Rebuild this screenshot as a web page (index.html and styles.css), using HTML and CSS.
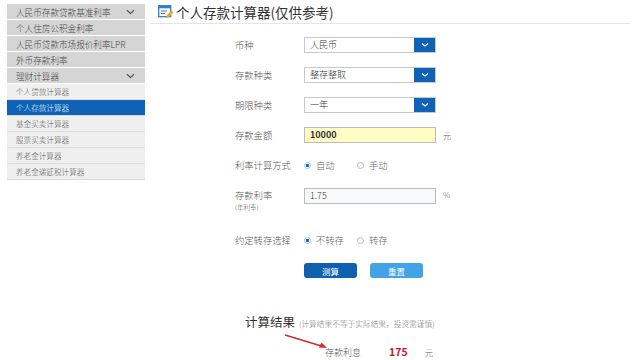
FILE: index.html
```html
<!DOCTYPE html>
<html lang="zh-CN">
<head>
    <meta charset="UTF-8">
    <meta name="viewport" content="width=device-width, initial-scale=1.0">
    <title>个人存款计算器</title>
    <link rel="stylesheet" href="styles.css">
</head>
<body>
    <div class="page">
        <ul class="side-nav">
            <li class="nav-item">人民币存款贷款基准利率
                <svg class="chev" viewBox="0 0 10 6"><path d="M1 1l4 3.5L9 1" fill="none" stroke="#555" stroke-width="1.3"/></svg>
            </li>
            <li class="nav-item">个人住房公积金利率</li>
            <li class="nav-item">人民币贷款市场报价利率LPR</li>
            <li class="nav-item">外币存款利率</li>
            <li class="nav-item">理财计算器
                <svg class="chev" viewBox="0 0 10 6"><path d="M1 1l4 3.5L9 1" fill="none" stroke="#555" stroke-width="1.3"/></svg>
            </li>
            <li class="sub-item">个人贷款计算器</li>
            <li class="sub-item active">个人存款计算器</li>
            <li class="sub-item">基金买卖计算器</li>
            <li class="sub-item">股票买卖计算器</li>
            <li class="sub-item">养老金计算器</li>
            <li class="sub-item">养老金递延税计算器</li>
        </ul>

        <div class="main">
            <h1 class="title">
                <svg class="title-icon" viewBox="0 0 15 14">
                    <rect x="0.7" y="0.7" width="12" height="11" fill="#fff" stroke="#2f7fd0" stroke-width="1.3"/>
                    <rect x="0.7" y="0.7" width="12" height="2.6" fill="#2f7fd0"/>
                    <path d="M3 6h6M3 8.5h4" stroke="#2f7fd0" stroke-width="1.2"/>
                    <path d="M8 13l1-3 4.5-4.5 2 2L11 12z" fill="#f0a21e"/>
                </svg>
                个人存款计算器(仅供参考)
            </h1>

            <form class="calc-form">
                <div class="row">
                    <span class="label">币种</span>
                    <div class="select">
                        <span class="select-text">人民币</span>
                        <span class="select-btn"><svg viewBox="0 0 10 6"><path d="M2 1.5l3 2.5 3-2.5" fill="none" stroke="#fff" stroke-width="1.2"/></svg></span>
                    </div>
                </div>
                <div class="row">
                    <span class="label">存款种类</span>
                    <div class="select">
                        <span class="select-text">整存整取</span>
                        <span class="select-btn"><svg viewBox="0 0 10 6"><path d="M2 1.5l3 2.5 3-2.5" fill="none" stroke="#fff" stroke-width="1.2"/></svg></span>
                    </div>
                </div>
                <div class="row">
                    <span class="label">期限种类</span>
                    <div class="select">
                        <span class="select-text">一年</span>
                        <span class="select-btn"><svg viewBox="0 0 10 6"><path d="M2 1.5l3 2.5 3-2.5" fill="none" stroke="#fff" stroke-width="1.2"/></svg></span>
                    </div>
                </div>
                <div class="row">
                    <span class="label">存款金额</span>
                    <div class="text-input amount">10000</div>
                    <span class="unit">元</span>
                </div>
                <div class="row">
                    <span class="label">利率计算方式</span>
                    <span class="radio checked"></span><span class="radio-text">自动</span>
                    <span class="radio"></span><span class="radio-text">手动</span>
                </div>
                <div class="row rate-row">
                    <span class="label">存款利率<small class="sub-label">(年利率)</small></span>
                    <div class="text-input rate">1.75</div>
                    <span class="unit">%</span>
                </div>
                <div class="row transfer-row">
                    <span class="label">约定转存选择</span>
                    <span class="radio checked"></span><span class="radio-text">不转存</span>
                    <span class="radio"></span><span class="radio-text">转存</span>
                </div>
                <div class="buttons">
                    <button type="button" class="btn btn-calc">测算</button>
                    <button type="button" class="btn btn-reset">重置</button>
                </div>
            </form>

            <div class="result">
                <h2 class="result-title">计算结果<span class="note">(计算结果不等于实际结果，投资需谨慎)</span></h2>
                <div class="result-row">
                    <span class="result-label">存款利息</span>
                    <span class="result-value">175</span>
                    <span class="result-unit">元</span>
                </div>
            </div>
        </div>
    </div>

    <svg class="arrow" viewBox="0 0 50 20">
        <path d="M2 2L40 13.5" stroke="#d8262c" stroke-width="1.4"/>
        <path d="M44 15l-8-0.5 2.5-5z" fill="#d8262c"/>
    </svg>
</body>
</html>
```

FILE: styles.css
```css
body {
    margin: 0;
    font-family: "Noto Sans CJK SC", "Liberation Sans", sans-serif;
    font-weight: 300;
    color: #555;
    background: #fff;
    overflow: hidden;
}
.page {
    display: flex;
    align-items: flex-start;
}
.side-nav {
    list-style: none;
    margin: 4px 0 0 7px;
    padding: 0;
    width: 138px;
}
.nav-item {
    display: flex;
    align-items: center;
    justify-content: space-between;
    height: 15px;
    margin-bottom: 1px;
    padding: 0 10px 0 9px;
    background: #d5d5d5;
    font-size: 8.6px;
    color: #444;
    white-space: nowrap;
}
.chev {
    width: 9px;
    height: 6px;
}
.sub-item {
    height: 15px;
    line-height: 15px;
    padding-left: 9px;
    background: #efefef;
    border-bottom: 1px solid #dadada;
    font-size: 7.6px;
    color: #555;
}
.sub-item.active {
    background: #0e63b6;
    color: #fff;
}
.main {
    margin-left: 5px;
    width: 480px;
}
.title {
    display: flex;
    align-items: center;
    height: 23px;
    margin: 0;
    padding-left: 8px;
    border-bottom: 1px solid #e6e6e6;
    font-size: 13.5px;
    font-weight: normal;
    color: #333;
}
.title-icon {
    width: 15px;
    height: 14px;
    margin-right: 3px;
}
.calc-form {
    margin: 6px 0 0 85px;
}
.row {
    display: flex;
    align-items: center;
    height: 30px;
    font-size: 9.3px;
}
.label {
    width: 69px;
    color: #555;
}
.select {
    display: flex;
    width: 132px;
    height: 16px;
    box-sizing: border-box;
    border: 1px solid #c9c9c9;
}
.select-text {
    flex: 1;
    padding-left: 5px;
    line-height: 14px;
    font-size: 9px;
    color: #333;
}
.select-btn {
    display: flex;
    align-items: center;
    justify-content: center;
    width: 21px;
    background: #0e63b6;
}
.select-btn svg {
    width: 10px;
    height: 6px;
}
.text-input {
    width: 132px;
    height: 16px;
    box-sizing: border-box;
    border: 1px solid #bdbdbd;
    padding-left: 5px;
    line-height: 14px;
    font-size: 9px;
    color: #333;
}
.amount {
    background: #fdfdc4;
    font-weight: bold;
}
.rate {
    background: #f7f9fb;
}
.unit {
    margin-left: 7px;
    font-size: 8px;
    color: #666;
}
.radio {
    width: 7px;
    height: 7px;
    box-sizing: border-box;
    border: 1px solid #bbb;
    border-radius: 50%;
    margin-right: 5px;
    background: #fff;
}
.radio.checked {
    border-color: #9cc3e8;
    background: radial-gradient(circle, #1b6cc0 0 1.5px, #fff 2px);
}
.radio-text {
    width: 41px;
    color: #666;
}
.rate-row {
    align-items: flex-start;
}
.rate-row .label {
    display: flex;
    flex-direction: column;
    padding-top: 8px;
    line-height: 15px;
}
.rate-row .text-input {
    margin-top: 8px;
}
.rate-row .unit {
    margin-top: 9px;
}
.sub-label {
    font-size: 6.5px;
    line-height: 9px;
}
.transfer-row {
    margin-top: 15px;
}
.buttons {
    display: flex;
    gap: 13px;
    margin: 8px 0 0 69px;
}
.btn {
    width: 53px;
    height: 15px;
    padding: 0;
    border: none;
    border-radius: 3px;
    font-family: inherit;
    font-size: 8.5px;
    color: #fff;
    cursor: pointer;
}
.btn-calc {
    background: #1060b0;
}
.btn-reset {
    background: #44a2e6;
}
.result {
    margin: 34px 0 0 95px;
}
.result-title {
    display: flex;
    align-items: baseline;
    margin: 0;
    font-size: 12.5px;
    font-weight: normal;
    color: #333;
}
.note {
    margin-left: 4px;
    font-size: 7.7px;
    font-weight: 300;
    color: #777;
}
.result-row {
    display: flex;
    align-items: baseline;
    margin: 13px 0 0 80px;
    font-size: 9px;
}
.result-label {
    width: 64px;
    color: #555;
}
.result-value {
    width: 36px;
    font-size: 10.5px;
    font-weight: bold;
    color: #c8102e;
}
.result-unit {
    font-size: 8px;
    color: #666;
}
.arrow {
    position: absolute;
    left: 283px;
    top: 333px;
    width: 50px;
    height: 20px;
}
```
